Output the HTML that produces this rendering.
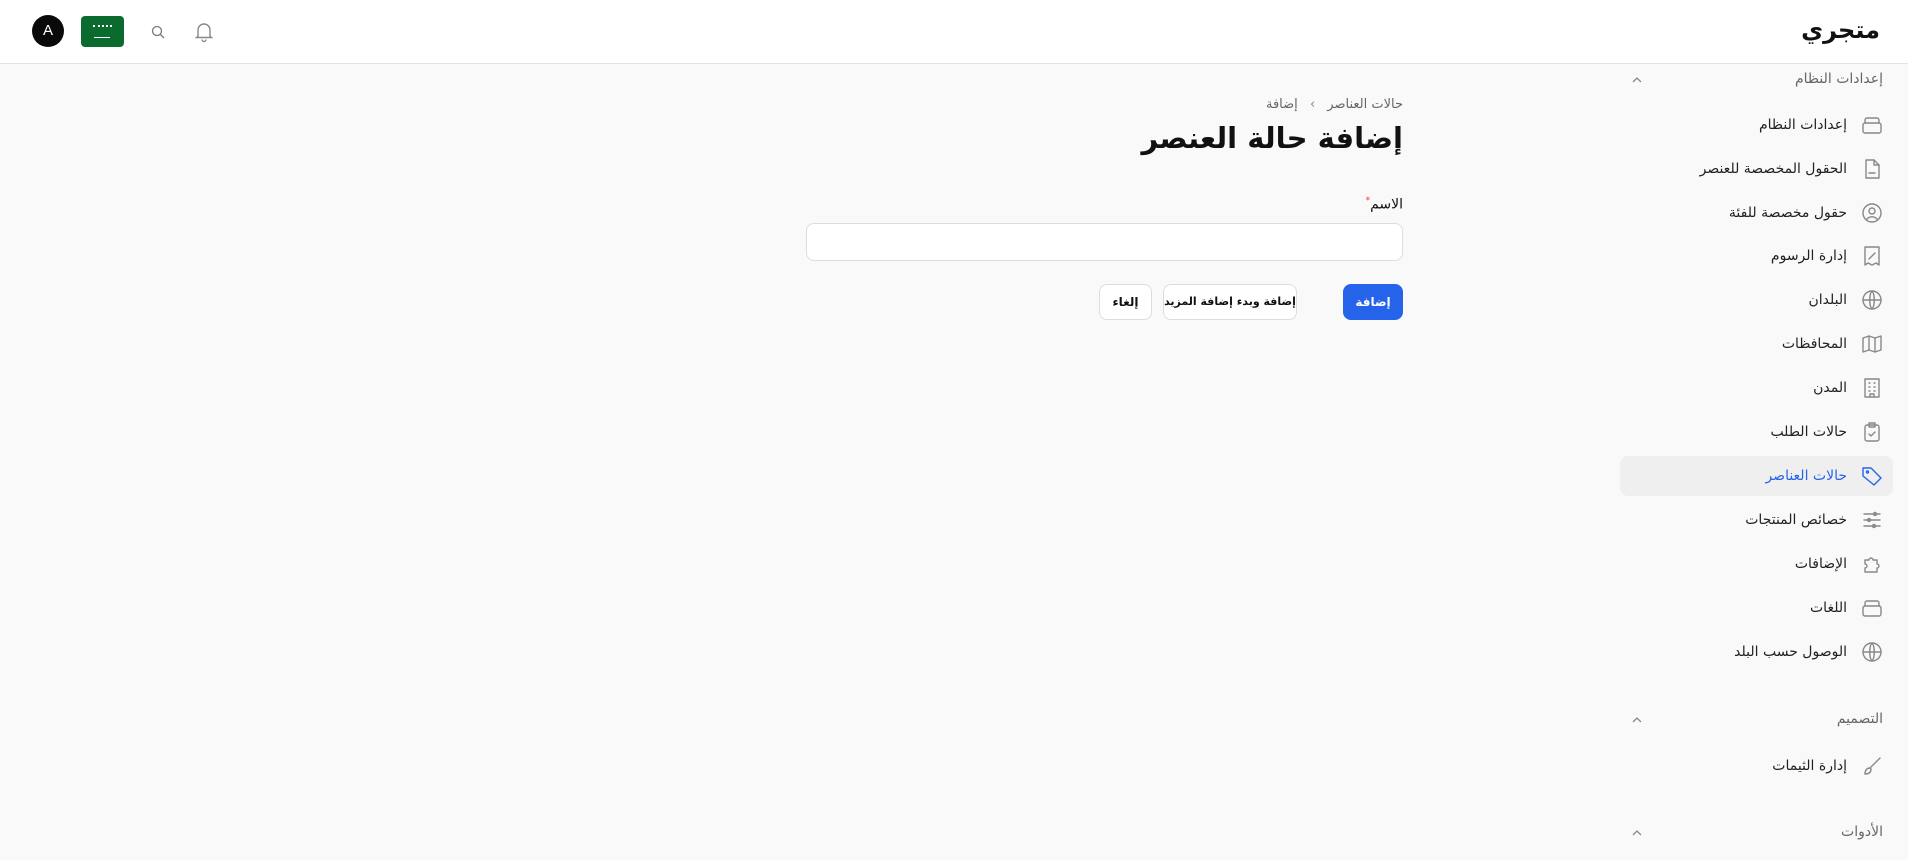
<!DOCTYPE html>
<html dir="rtl"><head><meta charset="utf-8"><style>
*{box-sizing:border-box;margin:0;padding:0}
body{width:1908px;height:860px;overflow:hidden;background:#f9f9f9;font-family:"DejaVu Sans","Liberation Sans",sans-serif;color:#111;position:relative}
.hdr{position:absolute;top:0;left:0;width:1908px;height:64px;background:#fff;border-bottom:1px solid #e3e3e3}
.abs{position:absolute}
.sec{position:absolute;right:25px;font-size:14px;color:#666;direction:rtl}
.chev{position:absolute;left:1630px;width:14px;height:14px}
.item{position:absolute;right:15px;width:273px;height:40px;border-radius:8px;font-size:14px;color:#222}
.item span{position:absolute;right:46px;top:12px;white-space:nowrap}
.item svg{position:absolute;right:9px;top:8px;width:24px;height:24px;fill:none;stroke:#888;stroke-width:1.4;stroke-linecap:round;stroke-linejoin:round}
.item.act{background:#efefef}
.item.act span{color:#2563eb}
.item.act svg{stroke:#2563eb}
.btn{position:absolute;top:284px;height:36px;border-radius:8px;font-size:12px;font-weight:bold;text-align:center;line-height:34px;border:1px solid #ddd;background:#fff;white-space:nowrap;letter-spacing:-0.3px}
</style></head><body>
<div class="hdr">
<div class="abs" style="right:28px;top:16px;font-size:24px;font-weight:bold">متجري</div>
<div class="abs" style="left:32px;top:15px;width:32px;height:32px;border-radius:50%;background:#0a0a0a;color:#fff;font-size:15px;text-align:center;line-height:32px;font-family:'Liberation Sans'">A</div>
<div class="abs" style="left:81px;top:16px;width:43px;height:31px;border-radius:4px;background:#0b6b2f"><div class="abs" style="left:12px;top:9px;width:19px;height:4px;border-top:2px dotted #fff"></div><div class="abs" style="left:13px;top:21px;width:16px;height:1px;background:#fff"></div></div>
<svg class="abs" style="left:150px;top:24px" width="16" height="16" viewBox="0 0 16 16" fill="none" stroke="#777" stroke-width="1.3"><circle cx="7" cy="7" r="4.5"/><path d="M10.5 10.5L14 14"/></svg>
<svg class="abs" style="left:192px;top:19px" width="24" height="24" viewBox="0 0 24 24" fill="none" stroke="#888" stroke-width="1.4"><path d="M6 17V11a6 6 0 0112 0v6l1.5 1.5h-15z"/><path d="M10 20.5a2 2 0 004 0"/></svg>
</div>
<div class="sec" style="top:71px">إعدادات النظام</div>
<svg class="chev" style="top:73px" viewBox="0 0 14 14" fill="none" stroke="#888" stroke-width="1.3"><path d="M3 9l4-4 4 4"/></svg>

<div class="item" style="top:105px"><svg viewBox="0 0 24 24"><rect x="3" y="10" width="18" height="10" rx="2"/><path d="M5 10V7a2 2 0 012-2h10a2 2 0 012 2v3"/></svg><span>إعدادات النظام</span></div>
<div class="item" style="top:149px"><svg viewBox="0 0 24 24"><path d="M6 3h8l5 5v13H6z"/><path d="M14 3v5h5M9 16h6"/></svg><span>الحقول المخصصة للعنصر</span></div>
<div class="item" style="top:193px"><svg viewBox="0 0 24 24"><circle cx="12" cy="12" r="9"/><circle cx="12" cy="10" r="3"/><path d="M6.5 18.5a7 7 0 0111 0"/></svg><span>حقول مخصصة للفئة</span></div>
<div class="item" style="top:236px"><svg viewBox="0 0 24 24"><path d="M5 3h14v18l-3-2-4 2-4-2-3 2z"/><path d="M9 15l6-6"/></svg><span>إدارة الرسوم</span></div>
<div class="item" style="top:280px"><svg viewBox="0 0 24 24"><circle cx="12" cy="12" r="9"/><path d="M3 12h18M12 3c3 3 3 15 0 18M12 3c-3 3-3 15 0 18"/></svg><span>البلدان</span></div>
<div class="item" style="top:324px"><svg viewBox="0 0 24 24"><path d="M3 6l6-2 6 2 6-2v14l-6 2-6-2-6 2z"/><path d="M9 4v14M15 6v14"/></svg><span>المحافظات</span></div>
<div class="item" style="top:368px"><svg viewBox="0 0 24 24"><rect x="5" y="3" width="14" height="18"/><path d="M9 7h1M14 7h1M9 11h1M14 11h1M9 15h1M14 15h1M10 21v-3h4v3"/></svg><span>المدن</span></div>
<div class="item" style="top:412px"><svg viewBox="0 0 24 24"><rect x="5" y="5" width="14" height="16" rx="2"/><path d="M9 3h6v4H9zM9 14l2 2 4-4"/></svg><span>حالات الطلب</span></div>
<div class="item act" style="top:456px"><svg viewBox="0 0 24 24"><path d="M3 12V4h8l10 10-7 7z"/><circle cx="7.5" cy="8" r="1"/></svg><span>حالات العناصر</span></div>
<div class="item" style="top:500px"><svg viewBox="0 0 24 24"><path d="M4 6h16M4 12h16M4 18h16"/><circle cx="15" cy="6" r="1.5"/><circle cx="9" cy="12" r="1.5"/><circle cx="14" cy="18" r="1.5"/></svg><span>خصائص المنتجات</span></div>
<div class="item" style="top:544px"><svg viewBox="0 0 24 24"><path d="M5 8h4a2 2 0 114 0h4v4a2 2 0 110 4v4H5v-4a2 2 0 100-4z"/></svg><span>الإضافات</span></div>
<div class="item" style="top:588px"><svg viewBox="0 0 24 24"><rect x="3" y="10" width="18" height="10" rx="2"/><path d="M5 10V7a2 2 0 012-2h10a2 2 0 012 2v3"/></svg><span>اللغات</span></div>
<div class="item" style="top:632px"><svg viewBox="0 0 24 24"><circle cx="12" cy="12" r="9"/><path d="M3 12h18M12 3c3 3 3 15 0 18M12 3c-3 3-3 15 0 18"/></svg><span>الوصول حسب البلد</span></div>

<div class="sec" style="top:711px">التصميم</div>
<svg class="chev" style="top:713px" viewBox="0 0 14 14" fill="none" stroke="#888" stroke-width="1.3"><path d="M3 9l4-4 4 4"/></svg>
<div class="item" style="top:746px"><svg viewBox="0 0 24 24"><path d="M20 4L10 14M10 14c-3 0-5 2-5 6 3 0 6-1 6-5z"/></svg><span>إدارة الثيمات</span></div>
<div class="sec" style="top:824px">الأدوات</div>
<svg class="chev" style="top:826px" viewBox="0 0 14 14" fill="none" stroke="#888" stroke-width="1.3"><path d="M3 9l4-4 4 4"/></svg>

<div class="abs" style="right:505px;top:97px;font-size:13px;color:#666;white-space:nowrap">حالات العناصر <span style="margin:0 8px;color:#888">›</span> إضافة</div>
<div class="abs" style="right:505px;top:121px;font-size:29px;font-weight:bold;white-space:nowrap">إضافة حالة العنصر</div>
<div class="abs" style="right:505px;top:196px;font-size:14px">الاسم<sup style="color:#e33;font-size:9px">*</sup></div>
<div class="abs" style="left:806px;top:223px;width:597px;height:38px;background:#fff;border:1px solid #ddd;border-radius:8px"></div>
<div class="btn" style="left:1343px;width:60px;background:#2563eb;border-color:#2563eb;color:#fff">إضافة</div>
<div class="btn" style="left:1163px;width:134px;font-size:11px;letter-spacing:-0.5px">إضافة وبدء إضافة المزيد</div>
<div class="btn" style="left:1099px;width:53px">إلغاء</div>
</body></html>
